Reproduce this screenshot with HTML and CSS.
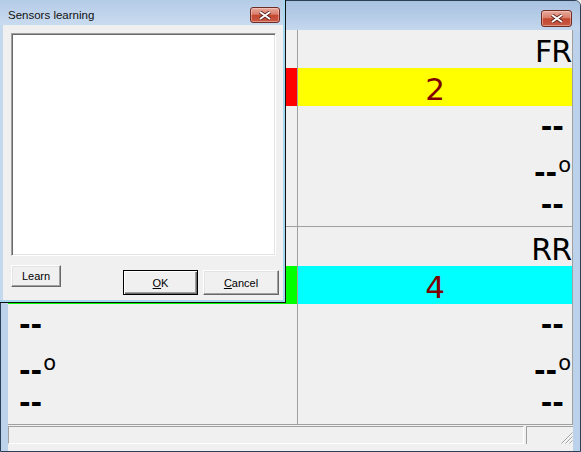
FILE: index.html
```html
<!DOCTYPE html>
<html>
<head>
  <meta charset="UTF-8"/>
  <title>Sensors</title>
  <link rel="stylesheet" href="styles.css">
</head>
<body>
  <div class="window">
    <div class="titlebar">
      <span class="closebtn main-close">
        <svg width="14" height="9" viewBox="0 0 14 9"><path d="M2 1 L12 8 M12 1 L2 8" stroke="#5b2620" stroke-width="3.6"/><path d="M2 1 L12 8 M12 1 L2 8" stroke="#fff" stroke-width="1.8"/></svg>
      </span>
    </div>
    <div class="client">
      <div class="grid">
        <div class="cell left">
          <div class="label">FL</div>
          <div class="bar red">1</div>
          <div class="values">
            <div class="val">--</div>
            <div class="val temp">--<span class="deg">o</span></div>
            <div class="val">--</div>
          </div>
        </div>
        <div class="cell right">
          <div class="label">FR</div>
          <div class="bar yellow">2</div>
          <div class="values">
            <div class="val">--</div>
            <div class="val temp">--<span class="deg">o</span></div>
            <div class="val">--</div>
          </div>
        </div>
        <div class="cell left second">
          <div class="label">RL</div>
          <div class="bar green">3</div>
          <div class="values">
            <div class="val">--</div>
            <div class="val temp">--<span class="deg">o</span></div>
            <div class="val">--</div>
          </div>
        </div>
        <div class="cell right second">
          <div class="label">RR</div>
          <div class="bar cyan">4</div>
          <div class="values">
            <div class="val">--</div>
            <div class="val temp">--<span class="deg">o</span></div>
            <div class="val">--</div>
          </div>
        </div>
      </div>
      <div class="statusbar">
        <div class="panel text"></div>
        <div class="panel gripbox">
          <svg class="grip" width="12" height="12" viewBox="0 0 12 12">
            <path d="M11.5 0.5 L0.5 11.5 M11.5 4.5 L4.5 11.5 M11.5 8.5 L8.5 11.5" stroke="#a0a0a0" stroke-width="1"/>
            <path d="M11.5 1.5 L1.5 11.5 M11.5 5.5 L5.5 11.5 M11.5 9.5 L9.5 11.5" stroke="#ffffff" stroke-width="1"/>
          </svg>
        </div>
      </div>
    </div>
  </div>

  <div class="dialog">
    <div class="dlg-title">
      <span class="dlg-caption">Sensors learning</span>
      <span class="closebtn dlg-close">
        <svg width="14" height="9" viewBox="0 0 14 9"><path d="M2 1 L12 8 M12 1 L2 8" stroke="#5b2620" stroke-width="3.6"/><path d="M2 1 L12 8 M12 1 L2 8" stroke="#fff" stroke-width="1.8"/></svg>
      </span>
    </div>
    <div class="dlg-body">
      <div class="listbox"></div>
      <div class="dlg-buttons">
        <button type="button" class="btn learn">Learn</button>
        <button type="button" class="btn ok default">OK</button>
        <button type="button" class="btn cancel">Cancel</button>
      </div>
    </div>
  </div>
</body>
</html>
```

FILE: styles.css
```css
body, html {
    margin: 0;
    padding: 0;
    background-color: #f0f0f0;
}
.window {
    box-sizing: border-box;
    width: 581px;
    height: 452px;
    display: flex;
    flex-direction: column;
    border: 1px solid #2b3f55;
    border-radius: 6px 6px 0 0;
    background-color: #bcd2ea;
}
.titlebar {
    height: 29px;
    box-sizing: border-box;
    display: flex;
    justify-content: flex-end;
    align-items: flex-start;
    padding: 9px 8px 0 0;
    background: linear-gradient(#a7c1e0, #c4d7ed);
    border-radius: 5px 5px 0 0;
}
.closebtn {
    box-sizing: border-box;
    display: flex;
    align-items: center;
    justify-content: center;
    border: 1px solid #6e2c24;
    border-radius: 3px;
    background: linear-gradient(#e8ab9f 0%, #d97d69 45%, #c4472f 52%, #c85a45 100%);
    box-shadow: inset 0 0 0 1px rgba(255, 220, 210, 0.45);
}
.main-close {
    width: 31px;
    height: 17px;
}
.client {
    flex: 1;
    margin: 0 7px;
    display: flex;
    flex-direction: column;
    background-color: #f0f0f0;
}
/* the sensor grid, gaps show as lines */
.grid {
    display: grid;
    grid-template-columns: 289px 274px;
    grid-template-rows: 196px 197px;
    gap: 1px;
    background-color: #a0a0a0;
    border-right: 1px solid #a0a0a0;
    border-bottom: 1px solid #a0a0a0;
}
.cell {
    display: flex;
    flex-direction: column;
    background-color: #f0f0f0;
    font-family: "DejaVu Sans", Verdana, sans-serif;
    color: #000;
}
.label {
    height: 38px;
    line-height: 43px;
    font-size: 30px;
    letter-spacing: -1px;
}
.second .label {
    height: 39px;
    line-height: 45px;
}
.right .label {
    text-align: right;
    padding-right: 1px;
}
.left .label {
    padding-left: 10px;
}
.bar {
    height: 38px;
    line-height: 43px;
    font-size: 31px;
    text-align: center;
    color: #800000;
}
.red { background-color: #ff0000; }
.yellow { background-color: #ffff00; }
.green { background-color: #00ff00; }
.cyan { background-color: #00ffff; }
.values {
    padding-top: 1px;
}
.val {
    height: 39px;
    line-height: 39px;
    font-size: 28px;
    font-weight: bold;
}
.right .val {
    text-align: right;
    padding-right: 8px;
}
.right .val.temp {
    padding-right: 1px;
}
.left .val {
    padding-left: 11px;
}
.deg {
    font-size: 21px;
    font-weight: normal;
    vertical-align: 10px;
    margin-left: 1px;
}
.statusbar {
    height: 19px;
    box-sizing: border-box;
    padding-top: 1px;
    display: flex;
    gap: 2px;
}
.panel {
    box-sizing: border-box;
    height: 18px;
    border-top: 1px solid #a0a0a0;
    border-left: 1px solid #a0a0a0;
    border-bottom: 1px solid #ffffff;
}
.panel.text {
    width: 516px;
    border-right: 1px solid #ffffff;
}
.panel.gripbox {
    flex: 1;
    display: flex;
    justify-content: flex-end;
    align-items: flex-end;
    border-bottom: none;
}
/* Sensors learning dialog sits over the main window */
.dialog {
    position: absolute;
    top: 0;
    left: 0;
    width: 286px;
    height: 303px;
    box-sizing: border-box;
    display: flex;
    flex-direction: column;
    background-color: #a3d8ee;
    border-right: 1px solid #111;
    border-bottom: 1px solid #111;
}
.dlg-title {
    height: 25px;
    box-sizing: border-box;
    margin-right: 2px;
    padding: 7px 3px 0 8px;
    display: flex;
    justify-content: space-between;
    align-items: flex-start;
    background: linear-gradient(#b5cce7, #c9dbef);
}
.dlg-caption {
    font-family: "Liberation Sans", Arial, sans-serif;
    font-size: 11.5px;
    line-height: 16px;
    color: #111;
}
.dlg-close {
    width: 30px;
    height: 16px;
}
.dlg-body {
    flex: 1;
    margin: 0 2px 2px 0;
    padding: 8px 0 0 8px;
    border-left: 3px solid #c4d8ee;
    background-color: #f0f0f0;
}
.listbox {
    box-sizing: border-box;
    width: 265px;
    height: 223px;
    background-color: #fff;
    border-top: 1px solid #a0a0a0;
    border-left: 1px solid #a0a0a0;
    border-right: 1px solid #fff;
    border-bottom: 1px solid #fff;
    box-shadow: inset 1px 1px 0 #696969, inset -1px -1px 0 #e3e3e3;
}
.dlg-buttons {
    display: flex;
    align-items: flex-start;
    margin-top: 9px;
}
.btn {
    box-sizing: border-box;
    padding: 0;
    margin: 0;
    background-color: #f0f0f0;
    border: 1px solid;
    border-color: #fff #696969 #696969 #fff;
    box-shadow: inset -1px -1px 0 #a0a0a0, inset 1px 1px 0 #e3e3e3;
    font-family: "Liberation Sans", Arial, sans-serif;
    font-size: 11px;
    color: #000;
}
/* access key letter */
.ok::first-letter, .cancel::first-letter {
    text-decoration: underline;
}
.btn.default {
    border-color: #000;
    box-shadow: inset 1px 1px 0 #fff, inset -1px -1px 0 #696969, inset -2px -2px 0 #a0a0a0;
}
.learn {
    width: 50px;
    height: 22px;
}
.ok {
    width: 75px;
    height: 25px;
    margin: 5px 0 0 62px;
}
.cancel {
    width: 76px;
    height: 25px;
    margin: 5px 0 0 5px;
}
```
